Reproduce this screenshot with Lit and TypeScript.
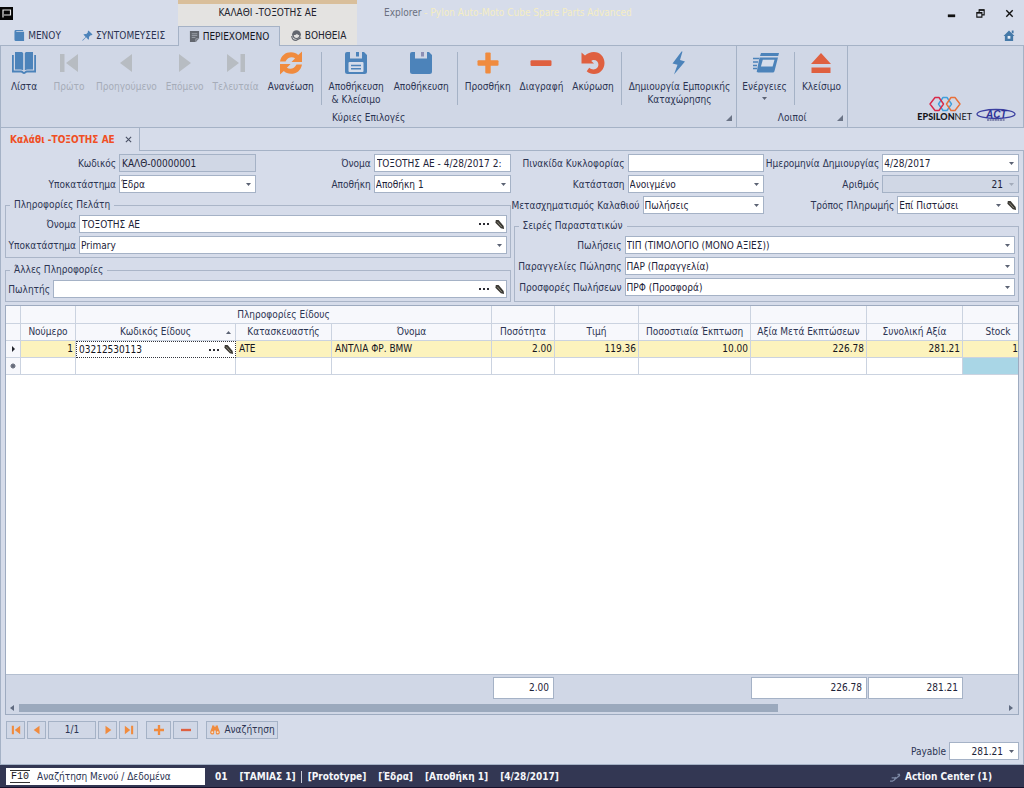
import { LitElement, html, css, svg, nothing, TemplateResult } from "lit";
import { customElement, property } from "lit/decorators.js";
import { classMap } from "lit/directives/class-map.js";

const BLUE = "#4c83ba";
const ORANGE = "#f08b3e";
const RED = "#df6040";
const GREY = "#b7bcc2";

const icons: Record<string, TemplateResult> = {
  book: svg`<path fill=${BLUE} d="M3 1h6c1.200 0 1.700.5 2.200 1.200v17C10.400 18.700 9.500 18.500 8.500 18.500H3zM21 1h-6c-1.200 0-1.700.5-2.200 1.200v17c.8-.5 1.700-.7 2.700-.7H21z"/><path fill="none" stroke=${BLUE} stroke-width="1.800" d="M.9 4v16.500h8.300c1.200 0 1.600 1.500 2.800 1.500s1.600-1.500 2.800-1.500h8.300V4"/>`,
  first: svg`<path fill=${GREY} d="M3 3h4.500v18H3zM21 3v18L9 12z"/>`,
  prev: svg`<path fill=${GREY} d="M18 3v18L6 12z"/>`,
  next: svg`<path fill=${GREY} d="M6 3v18l12-9z"/>`,
  last: svg`<path fill=${GREY} d="M16.500 3H21v18h-4.500zM3 3v18l12-9z"/>`,
  refresh: svg`<path fill=${ORANGE} d="M1 10.500C2 4.500 6.500 1.200 12 1.200c3 0 5.400 1 7.200 2.700L23 .5v10.500H12.500l3.600-3.700C13 5.200 8.500 6.200 6.500 10.500zM23 13.500c-1 6-5.500 9.300-11 9.300-3 0-5.400-1-7.200-2.700L1 23.500V13h10.500l-3.600 3.700c3.100 2.100 7.600 1.100 9.600-3.200z"/>`,
  saveClose: svg`<path fill=${BLUE} d="M3 1h3v6.500h12V1h2l3 3v16.500a2.500 2.500 0 0 1-2.500 2.500h-17A2.500 2.500 0 0 1 1 20.500V3a2 2 0 0 1 2-2z"/><path fill=${BLUE} d="M12 1h3v4.500h-3z"/><rect x="4.500" y="11" width="15" height="10" rx="1" fill="#d5ddeb"/><path stroke=${BLUE} stroke-width="1.500" d="M7 14.500h10M7 17.800h10"/>`,
  save: svg`<path fill=${BLUE} d="M3 1h3v6.500h12V1h2l3 3v16.500a2.500 2.500 0 0 1-2.500 2.500h-17A2.500 2.500 0 0 1 1 20.500V3a2 2 0 0 1 2-2z"/><path fill="#8d8fb5" d="M12 1h3v4.500h-3z"/>`,
  plus: svg`<rect x="1.500" y="9.300" width="21" height="5.400" rx="1" fill=${ORANGE}/><rect x="9.300" y="1.500" width="5.400" height="21" rx="1" fill=${ORANGE}/>`,
  minus: svg`<rect x="1.500" y="9.300" width="21" height="5.600" rx="1.200" fill=${RED}/>`,
  undo: svg`<path fill=${RED} d="M.5 1.500 4 4.500C6.500 2.300 9.500 1 12.800 1 19 1 23.500 5.800 23.500 12S19 23 13 23c-3 0-5.300-1-7.300-2.800l2.500-3.400c1.300 1 2.600 1.600 4.300 1.600 2.900 0 4.900-2 4.900-4.800s-2-4.600-4.600-4.600c-1.200 0-1.800.3-2.500.9l2.700 2.600H.5z"/>`,
  bolt: svg`<path fill=${BLUE} d="M14.500.5 5.500 12.500l5 1.200L7 23.500l11-13-5-1.500L15.500.5z"/>`,
  actions: svg`<path fill=${BLUE} d="M8 2h18l-.8 3H7zM6.500 6.500h18.500L21.500 20c-.3 1-1 1.500-2 1.500H5c-1 0-1.400-.5-1.200-1.300z"/><path fill="#d5ddeb" d="M9.800 8.800h11.700l-1.900 6.700H7.900z"/><path stroke=${BLUE} stroke-width="1.400" d="M0 7.500h6M0 11h5M0 14.500h4M0 17.500h4"/>`,
  eject: svg`<path fill=${RED} d="M12 2 22 13H2zM2.500 16.500h19v5.500h-19z"/>`,
};

const arrowDown = (cls = "") =>
  html`<svg class="arrow ${cls}" viewBox="0 0 5 3" aria-hidden="true"><path fill="currentColor" d="M0 0h5L2.500 3z"/></svg>`;

const pencil = html`<svg class="pencil" viewBox="0 0 12 12" aria-hidden="true">
  <path fill="#3a3833" d="M2 1h3l5.500 6.500.5 3.500-3.500-.8L1.500 4z"/>
  <path stroke="#a8a493" stroke-width=".8" d="m3.500 3 5 5.800"/>
</svg>`;

const icon24 = (name: string) =>
  html`<svg class="big" viewBox="0 0 24 24" aria-hidden="true">${icons[name]}</svg>`;

/* Values and metrics shared by every element of the window. */
const shared = css`
  :host {
    box-sizing: border-box;
    --ink: #2c3452;
    --line: #a5b2c6;
    --panel: #d6dcea;
  }
  * {
    box-sizing: border-box;
  }
  button,
  input,
  select {
    font: inherit;
    color: inherit;
    margin: 0;
    padding: 0;
    border: 0;
    background: none;
    border-radius: 0;
    outline: none;
    min-width: 0;
  }
  svg {
    display: block;
    flex: none;
    overflow: visible;
  }
  .arrow {
    width: 5px;
    height: 3px;
    color: #5b6273;
  }
  .pencil {
    width: 11px;
    height: 11px;
  }
`;

type Kind = "text" | "select" | "lookup" | "spin" | "selectEdit";

@customElement("form-field")
export class FormField extends LitElement {
  @property() label = "";
  @property() value = "";
  @property() kind: Kind = "text";
  @property({ type: Boolean }) locked = false;

  static styles = [
    shared,
    css`
      :host {
        display: flex;
        align-items: center;
        gap: 3px;
        height: 18px;
        min-width: 0;
      }
      label {
        flex: 0 0 var(--label, 111px);
        min-width: 0;
        padding-top: 1px;
        white-space: nowrap;
        display: flex;
        justify-content: flex-end;
      }
      .box {
        flex: 1;
        min-width: 0;
        height: 18px;
        display: grid;
        grid-template-columns: 1fr auto;
        align-items: center;
        background: #fff;
        border: 1px solid var(--line);
        color: #1d2338;
      }
      .locked {
        background: #d0d7e5;
      }
      .locked .arrow {
        color: #a3abba;
      }
      input,
      select {
        grid-area: 1 / 1 / 2 / 2;
        width: 100%;
        height: 16px;
        padding-left: 2px;
        appearance: none;
      }
      select {
        grid-area: 1 / 1 / 2 / 3;
        padding: 1px 0 0 1px;
      }
      .spin input {
        text-align: right;
      }
      .tools {
        grid-area: 1 / 2 / 2 / 3;
        display: flex;
        align-items: center;
        gap: 4px;
        padding-right: 4px;
        pointer-events: none;
      }
      .spin .tools {
        padding-left: 6px;
      }
      .edit {
        padding-right: 1px;
        gap: 5px;
      }
      .dots {
        width: 10px;
        height: 2px;
      }
    `,
  ];

  render() {
    const dots = html`<svg class="dots" viewBox="0 0 10 2" aria-hidden="true"><path fill="#2b2b33" d="M0 0h2v2H0zM4 0h2v2H4zM8 0h2v2H8z"/></svg>`;
    const isSelect = this.kind === "select" || this.kind === "selectEdit";
    const edit = this.kind === "lookup" || this.kind === "selectEdit";
    return html`
      <label for="f">${this.label}</label>
      <div class=${classMap({ box: true, locked: this.locked, spin: this.kind === "spin" })}>
        ${isSelect
          ? html`<select id="f"><option>${this.value}</option></select>`
          : html`<input id="f" .value=${this.value} ?readonly=${this.locked} />`}
        ${this.kind === "text"
          ? nothing
          : html`<span class=${classMap({ tools: true, edit })}>
              ${this.kind === "lookup" ? dots : arrowDown()}
              ${edit ? pencil : nothing}
            </span>`}
      </div>
    `;
  }
}

@customElement("app-ribbon")
export class AppRibbon extends LitElement {
  static styles = [
    shared,
    css`
      :host {
        display: flex;
        height: 83px;
        background: #d0d7e6;
        border: 1px solid var(--line);
      }
      .group {
        display: flex;
        flex-direction: column;
        border-right: 1px solid var(--line);
      }
      .buttons {
        display: flex;
        flex: 1;
        gap: 1px;
        padding: 4px 2px 0 1px;
      }
      .sep {
        width: 1px;
        height: 53px;
        margin: 2px 2px 0;
        background: var(--line);
      }
      button {
        display: flex;
        flex-direction: column;
        align-items: center;
        min-width: 44px;
        padding: 0 4px;
        line-height: 13px;
        white-space: pre;
      }
      button:disabled {
        color: #a6acb8;
      }
      .big {
        width: 24px;
        height: 24px;
        margin: 1px 0 5px;
      }
      .wide {
        padding: 0 5px;
      }
      .drop {
        margin-top: 4px;
      }
      .caption {
        display: grid;
        grid-template-columns: 7px 1fr 7px;
        align-items: center;
        height: 18px;
        padding: 0 3px;
        text-align: center;
      }
      .caption span {
        grid-column: 2;
      }
      .corner {
        width: 6px;
        height: 6px;
      }
      .brand {
        margin-left: auto;
        align-self: flex-end;
        display: flex;
        align-items: flex-end;
        gap: 4px;
        padding: 0 7px 5px 0;
      }
      .eps {
        display: flex;
        flex-direction: column;
        align-items: center;
        font: 9px/10px Lato, sans-serif;
        color: #15151a;
      }
      .eps b {
        font-weight: 900;
      }
      .rings {
        width: 32px;
        height: 16px;
      }
      .act {
        width: 40px;
        height: 14px;
      }
    `,
  ];

  private btn(icon: string, text: string, opts: { off?: boolean; wide?: boolean; drop?: boolean } = {}) {
    return html`<button class=${classMap({ wide: !!opts.wide })} ?disabled=${!!opts.off}>
      ${icon24(icon)}<span>${text}</span>${opts.drop ? arrowDown("drop") : nothing}
    </button>`;
  }

  render() {
    const sep = html`<i class="sep"></i>`;
    const corner = html`<svg class="corner" viewBox="0 0 6 6" aria-hidden="true"><path fill="#6b7486" d="M6 0v6H0z"/></svg>`;
    return html`
      <div class="group">
        <div class="buttons">
          ${this.btn("book", "Λίστα")} ${this.btn("first", "Πρώτο", { off: true })}
          ${this.btn("prev", "Προηγούμενο", { off: true })} ${this.btn("next", "Επόμενο", { off: true })}
          ${this.btn("last", "Τελευταία", { off: true })} ${this.btn("refresh", "Ανανέωση")} ${sep}
          ${this.btn("saveClose", "Αποθήκευση\n& Κλείσιμο")} ${this.btn("save", "Αποθήκευση", { wide: true })} ${sep}
          ${this.btn("plus", "Προσθήκη")} ${this.btn("minus", "Διαγραφή")} ${this.btn("undo", "Ακύρωση")} ${sep}
          ${this.btn("bolt", "Δημιουργία Εμπορικής\nΚαταχώρησης")}
        </div>
        <div class="caption"><span>Κύριες Επιλογές</span>${corner}</div>
      </div>
      <div class="group">
        <div class="buttons">
          ${this.btn("actions", "Ενέργειες", { drop: true })} ${sep} ${this.btn("eject", "Κλείσιμο")}
        </div>
        <div class="caption"><span>Λοιποί</span>${corner}</div>
      </div>
      <div class="brand">
        <div class="eps">
          <svg class="rings" viewBox="0 0 32 16" aria-hidden="true">
            <g fill="none" stroke-width="1.400" stroke-linejoin="round">
              <path stroke="#3f9fdc" d="M14 1.500h4L22.500 8 18 14.500h-4L9.500 8z"/>
              <path stroke="#d8294a" d="M6 1.500h4L14.500 8 10 14.500H6L1 8z"/>
              <path stroke="#e8703a" d="M22 1.500h4L31 8l-5 6.500h-4L17.500 8z"/>
            </g>
          </svg>
          <span><b>EPSILON</b>NET</span>
        </div>
        <svg class="act" viewBox="0 0 40 14" role="img" aria-label="ACT">
          <ellipse cx="20" cy="6" rx="19" ry="4.500" fill="none" stroke="#3a3fa0" stroke-width="1.300"/>
          <text x="10" y="10" font-family="Liberation Sans" font-weight="700" font-style="italic" font-size="10" fill="#2d3296">ACT</text>
          <path stroke="#3a3f78" stroke-dasharray="2 .6" d="M11 12h18"/>
        </svg>
      </div>
    `;
  }
}

@customElement("item-grid")
export class ItemGrid extends LitElement {
  static styles = [
    shared,
    css`
      :host {
        display: flex;
        flex-direction: column;
        flex: 1;
        min-width: 0;
        border: 1px solid #9eabc0;
        background: #fff;
        overflow: hidden;
      }
      .scroll {
        flex: 1;
        overflow: hidden;
      }
      table {
        border-collapse: separate;
        border-spacing: 0;
        table-layout: fixed;
        width: 100%;
        min-width: 1012px;
      }
      .c-mark {
        width: 15px;
      }
      .c-num {
        width: 55px;
      }
      .c-code,
      .c-name {
        width: 160px;
      }
      .c-maker,
      .c-total {
        width: 96px;
      }
      .c-qty {
        width: 63px;
      }
      .c-price {
        width: 84px;
      }
      .c-disc {
        width: 112px;
      }
      .c-net {
        width: 116px;
      }
      th,
      td {
        height: 17px;
        padding: 0 3px;
        border-right: 1px solid #cbd3e0;
        border-bottom: 1px solid #cbd3e0;
        white-space: nowrap;
        font-weight: 400;
        line-height: 14px;
      }
      th:last-child,
      td:last-child {
        border-right: 0;
      }
      th {
        background: #f7f8fc;
        text-align: center;
        color: var(--ink);
      }
      thead tr:first-child th {
        height: 18px;
      }
      th:last-child {
        padding-left: 18px;
      }
      td {
        color: #15151d;
      }
      .cur td {
        background: #fcf3bd;
      }
      .cur .mark,
      .mark {
        background: #f7f8fc;
        padding: 0;
      }
      .mark svg {
        margin: 0 auto;
      }
      .n {
        text-align: right;
        padding-right: 2px;
      }
      .n:last-child {
        padding-right: 0;
      }
      .sorted {
        display: grid;
        grid-template-columns: 6px 1fr 6px;
        align-items: center;
      }
      .sorted span {
        grid-column: 2;
      }
      .up {
        transform: rotate(180deg);
      }
      .cur .edit {
        background: #fff;
        padding: 0;
        border: 1px dotted #33363f;
      }
      .editor {
        display: flex;
        align-items: center;
        gap: 4px;
        padding: 0 1px 0 2px;
      }
      .editor input {
        flex: 1;
        height: 14px;
      }
      .dots {
        width: 10px;
        height: 2px;
      }
      .fill {
        background: #a9d6e6;
      }
      .foot {
        background: #d0d7e6;
        border-top: 1px solid #b4bfd0;
        height: 40px;
      }
      .sums {
        display: grid;
        grid-template-columns: 487px 62px 196px 117px 96px;
        padding-top: 2px;
      }
      .sum {
        height: 22px;
        margin-right: 1px;
        padding-right: 4px;
        background: #fff;
        border: 1px solid var(--line);
        text-align: right;
        line-height: 20px;
        color: #1d2338;
      }
      .bar {
        display: grid;
        grid-template-columns: 5px 1fr 5px;
        gap: 4px;
        align-items: center;
        padding: 5px 4px 0;
      }
      .bar svg {
        width: 4px;
        height: 6px;
      }
      .thumb {
        width: 77%;
        height: 8px;
        background: #9ba9bd;
      }
    `,
  ];

  render() {
    const heads = ["Νούμερο", "", "Κατασκευαστής", "Όνομα", "Ποσότητα", "Τιμή", "Ποσοστιαία Έκπτωση", "Αξία Μετά Εκπτώσεων", "Συνολική Αξία", "Stock"];
    const cols = ["mark", "num", "code", "maker", "name", "qty", "price", "disc", "net", "total", "stock"];
    const amounts = ["2.00", "119.36", "10.00", "226.78", "281.21", "1"];
    return html`
      <div class="scroll">
        <table>
          <colgroup>${cols.map((c) => html`<col class="c-${c}" />`)}</colgroup>
          <thead>
            <tr>
              <th></th><th></th><th colspan="3">Πληροφορίες Είδους</th>
              ${[0, 1, 2, 3, 4, 5].map(() => html`<th></th>`)}
            </tr>
            <tr>
              <th></th>
              ${heads.map((h) =>
                h
                  ? html`<th>${h}</th>`
                  : html`<th><div class="sorted"><span>Κωδικός Είδους</span>${arrowDown("up")}</div></th>`
              )}
            </tr>
          </thead>
          <tbody>
            <tr class="cur">
              <td class="mark"><svg width="3" height="6" viewBox="0 0 3 6" aria-hidden="true"><path d="M0 0v6l3-3z" fill="#22242c"/></svg></td>
              <td class="n">1</td>
              <td class="edit">
                <div class="editor">
                  <input aria-label="Κωδικός Είδους" .value=${"03212530113"} />
                  <svg class="dots" viewBox="0 0 10 2" aria-hidden="true"><path fill="#2b2b33" d="M0 0h2v2H0zM4 0h2v2H4zM8 0h2v2H8z"/></svg>
                  ${pencil}
                </div>
              </td>
              <td>ATE</td>
              <td>ΑΝΤΛΙΑ ΦΡ. BMW</td>
              ${amounts.map((a) => html`<td class="n">${a}</td>`)}
            </tr>
            <tr>
              <td class="mark"><svg width="6" height="6" viewBox="0 0 6 6" aria-hidden="true"><circle cx="3" cy="3" r="2" fill="#666b7a"/><path stroke="#666b7a" stroke-width=".8" d="M3 0v6M0 3h6M1 1l4 4M5 1 1 5"/></svg></td>
              ${[0, 1, 2, 3, 4, 5, 6, 7, 8].map(() => html`<td></td>`)}
              <td class="fill"></td>
            </tr>
          </tbody>
        </table>
      </div>
      <div class="foot">
        <div class="sums">
          <span></span><div class="sum">2.00</div><span></span>
          <div class="sum">226.78</div><div class="sum">281.21</div>
        </div>
        <div class="bar">
          <svg viewBox="0 0 4 6" aria-hidden="true"><path fill="#5f6a80" d="M4 0v6L0 3z"/></svg>
          <div class="thumb"></div>
          <svg viewBox="0 0 4 6" aria-hidden="true"><path fill="#5f6a80" d="M0 0v6l4-3z"/></svg>
        </div>
      </div>
    `;
  }
}

@customElement("app-root")
export class AppRoot extends LitElement {
  static styles = [
    shared,
    css`
      :host {
        display: flex;
        flex-direction: column;
        min-height: 100vh;
        background: #d6dcea;
        color: var(--ink);
        font: 10px/12px "DejaVu Sans Condensed", "Noto Sans", sans-serif;
      }
      header {
        display: grid;
        grid-template-columns: 178px 179px 1fr auto;
        height: 45px;
      }
      .start,
      .context,
      .title,
      .window {
        display: grid;
        grid-template-rows: 26px 19px;
        align-items: center;
      }
      .context {
        grid-template-rows: 22px 19px;
        background: #e4e3e1;
        border-top: 4px solid #d9bf9b;
        justify-items: center;
        color: #22222c;
      }
      .context > span {
        padding-bottom: 5px;
      }
      .tabs {
        display: flex;
        align-self: stretch;
        justify-self: stretch;
      }
      .tabs button {
        display: flex;
        align-items: center;
        justify-content: center;
        gap: 3px;
        flex: 1;
        border: 1px solid transparent;
        white-space: nowrap;
      }
      .start .tabs {
        padding-right: 6px;
      }
      .tabs .menu {
        flex: 0 0 75px;
      }
      .tabs .on {
        flex: 0 0 102px;
        height: 20px;
        background: #d0d7e6;
        border-color: var(--line);
        border-bottom: 0;
        color: #15151d;
        z-index: 1;
      }
      .tabs svg {
        width: 11px;
        height: 11px;
      }
      .logo {
        width: 13px;
        height: 13px;
      }
      .title {
        padding-left: 27px;
        color: #6b7080;
        white-space: pre;
      }
      .title b {
        font-weight: 400;
        color: #f4edc4;
      }
      .window div {
        display: flex;
        gap: 18px;
        padding-right: 9px;
      }
      .window button,
      .window button svg {
        width: 11px;
        height: 11px;
      }
      .window a {
        justify-self: end;
        padding-right: 9px;
      }
      .window a svg {
        width: 12px;
        height: 11px;
      }
      nav {
        display: flex;
        height: 23px;
        align-items: stretch;
      }
      .doc {
        display: flex;
        align-items: center;
        gap: 10px;
        width: 140px;
        padding-left: 9px;
        border: 1px solid var(--line);
        border-top: 0;
        border-bottom: 0;
        font-weight: 700;
        color: #f04e23;
        white-space: nowrap;
      }
      .doc svg {
        width: 7px;
        height: 7px;
      }
      .rest {
        flex: 1;
        border-bottom: 1px solid var(--line);
      }
      main {
        flex: 1;
        display: flex;
        flex-direction: column;
        padding: 3px 4px 4px;
        border: 1px solid var(--line);
        border-top: 0;
      }
      .form {
        display: grid;
        grid-template-columns: 1fr 1fr;
        gap: 3px;
        margin-bottom: 3px;
      }
      .half {
        display: flex;
        flex-direction: column;
        gap: 6px;
        min-width: 0;
      }
      .pairs {
        display: grid;
        grid-template-columns: 1fr 1fr;
        gap: 3px 4px;
      }
      .third {
        --label: 126px;
      }
      fieldset {
        margin: 0;
        min-width: 0;
        padding: 4px 3px 3px;
        border: 1px solid #aab5c8;
        display: flex;
        flex-direction: column;
        gap: 3px;
      }
      fieldset:last-child {
        flex: 1;
      }
      legend {
        margin-left: 1px;
        padding: 0 4px;
        height: 12px;
      }
      .customer {
        --label: 67px;
      }
      .other {
        --label: 41px;
      }
      .series {
        --label: 104px;
      }
      .pager {
        display: flex;
        gap: 2px;
        padding: 6px 1px 3px;
      }
      .pager button,
      .pager output {
        display: flex;
        align-items: center;
        justify-content: center;
        gap: 3px;
        width: 19px;
        height: 18px;
        border: 1px solid var(--line);
        background: #d0d7e6;
      }
      .pager output {
        width: 48px;
      }
      .pager .mid {
        width: 25px;
      }
      .pager .gap {
        margin-left: 6px;
      }
      .pager .find {
        width: 72px;
      }
      .pager svg {
        width: 10px;
        height: 10px;
      }
      .pager .find svg {
        width: 12px;
      }
      .payable {
        display: flex;
        justify-content: flex-end;
        --label: 50px;
      }
      .payable form-field {
        width: 123px;
      }
      footer {
        display: flex;
        align-items: center;
        height: 23px;
        padding: 1px 4px 0 6px;
        background: #333753;
        border-bottom: 1px solid #16112b;
        color: #f5f6fa;
        font-weight: 700;
      }
      .search {
        display: flex;
        align-items: center;
        width: 199px;
        height: 17px;
        padding-left: 4px;
        background: #fff;
        color: #2c3452;
        font-weight: 400;
      }
      .search kbd {
        padding: 0 1px;
        border: solid #333;
        border-width: 1px 0;
        font: 10px/11px "Liberation Mono", monospace;
        color: #15151d;
      }
      .search input {
        flex: 1;
        padding-left: 7px;
      }
      .search input::placeholder {
        color: inherit;
        opacity: 1;
      }
      .status {
        display: flex;
        gap: 12px;
        padding-left: 10px;
        white-space: nowrap;
      }
      .status .split {
        padding-right: 5px;
        margin-right: -6px;
        border-right: 1px solid #c9ccd8;
      }
      .center {
        margin-left: auto;
        margin-right: 28px;
        display: flex;
        align-items: center;
        gap: 4px;
        font-weight: 700;
      }
      .center svg {
        width: 12px;
        height: 10px;
      }
    `,
  ];

  render() {
    const glyph = (body: TemplateResult, box = "0 0 12 12") =>
      html`<svg viewBox=${box} aria-hidden="true">${body}</svg>`;
    return html`
      <header>
        <div class="start">
          <svg class="logo" viewBox="0 0 13 13" aria-hidden="true"><path fill="#050505" d="M0 0h13v13H0z"/><path fill="none" stroke="#e8e8e8" stroke-width="1.200" d="M3 10.500V3h7.500v5H4"/></svg>
          <div class="tabs">
            <button class="menu">${glyph(svg`<path fill=${BLUE} d="M2 0h8v1.200H2.500v.8H11v10H2a1.500 1.500 0 0 1-1.500-1.500v-9A1.500 1.500 0 0 1 2 0z"/>`)}ΜΕΝΟΥ</button>
            <button>${glyph(svg`<path fill=${BLUE} d="m7 .5 4.500 4.500-1.200.8-.8-.2-2 2c.4 1.200.2 2.200-.5 3L4.500 8 .8 11.800l-.5-.5L4 7.500 1.500 5c.8-.7 1.800-.9 3-.5l2-2-.2-1z"/>`)}ΣΥΝΤΟΜΕΥΣΕΙΣ</button>
          </div>
        </div>
        <div class="context">
          <span>ΚΑΛΑΘΙ -ΤΟΞΟΤΗΣ ΑΕ</span>
          <div class="tabs">
            <button class="on">${glyph(svg`<path fill="#63676f" d="M1 0h10v8L7.500 12H1z"/><path stroke="#aeb3bd" stroke-width=".8" fill="none" d="M3 3h6M3 5h6M3 7h4M7.500 12V8.500H11"/>`)}ΠΕΡΙΕΧΟΜΕΝΟ</button>
            <button>${glyph(svg`<circle cx="6" cy="5" r="4.800" fill="#63676f"/><path fill="#e4e3e1" d="M3 5.500c2 0 3-.5 3.500-1.500.5 1 1.300 1.400 2.500 1.500 0 2.200-1.400 3.300-3 3.300S3 7.700 3 5.500z"/><path fill="none" stroke="#63676f" stroke-width="1.300" d="M.8 6.500C1 9.500 3 11.300 5.500 11.300L11 8.500"/>`)}ΒΟΗΘΕΙΑ</button>
          </div>
        </div>
        <div class="title"><span>Explorer <b>- Pylon Auto-Moto Cube Spare Parts Advanced</b></span></div>
        <div class="window">
          <div>
            <button aria-label="Minimize">${glyph(svg`<path fill="#111" d="M2 7h8v3H2z"/>`)}</button>
            <button aria-label="Restore">${glyph(svg`<path fill="none" stroke="#111" stroke-width="1.200" d="M2 5h5.500v5H2zM4.500 5V2H10v5.500H7.500"/><path fill="#111" d="M2 4.500h5.500V6H2zM4.500 1.500H10V3H4.500z"/>`)}</button>
            <button aria-label="Close">${glyph(svg`<path stroke="#111" stroke-width="1.500" d="m2.500 2.500 7 7M9.500 2.500l-7 7"/>`)}</button>
          </div>
          <a href="#" aria-label="Home">${glyph(svg`<path fill="#4579a8" d="M6 .5 12 6.500h-1.500V12h-9V6.500H0zM9 .5h2v3H9z"/><path fill="#e8eef7" d="M4.500 6.500h3v3h-3z"/>`)}</a>
        </div>
      </header>

      <app-ribbon></app-ribbon>

      <nav>
        <button class="doc">Καλάθι -ΤΟΞΟΤΗΣ ΑΕ ${glyph(svg`<path stroke="#4a5166" stroke-width="1.300" d="m1 1 6 6M7 1 1 7"/>`, "0 0 8 8")}</button>
        <div class="rest"></div>
      </nav>

      <main>
        <div class="form">
          <div class="half">
            <div class="pairs">
              <form-field label="Κωδικός" value="ΚΑΛΘ-00000001" locked></form-field>
              <form-field label="Όνομα" value="ΤΟΞΟΤΗΣ ΑΕ - 4/28/2017 2:"></form-field>
              <form-field label="Υποκατάστημα" value="Έδρα" kind="select"></form-field>
              <form-field label="Αποθήκη" value="Αποθήκη 1" kind="select"></form-field>
            </div>
            <fieldset class="customer">
              <legend>Πληροφορίες Πελάτη</legend>
              <form-field label="Όνομα" value="ΤΟΞΟΤΗΣ ΑΕ" kind="lookup"></form-field>
              <form-field label="Υποκατάστημα" value="Primary" kind="select"></form-field>
            </fieldset>
            <fieldset class="other">
              <legend>Άλλες Πληροφορίες</legend>
              <form-field label="Πωλητής" kind="lookup"></form-field>
            </fieldset>
          </div>
          <div class="half">
            <div class="pairs">
              <form-field label="Πινακίδα Κυκλοφορίας"></form-field>
              <form-field label="Ημερομηνία Δημιουργίας" value="4/28/2017" kind="select"></form-field>
              <form-field label="Κατάσταση" value="Ανοιγμένο" kind="select"></form-field>
              <form-field label="Αριθμός" value="21" kind="spin" locked></form-field>
              <form-field class="third" label="Μετασχηματισμός Καλαθιού" value="Πωλήσεις" kind="select"></form-field>
              <form-field class="third" label="Τρόπος Πληρωμής" value="Επί Πιστώσει" kind="selectEdit"></form-field>
            </div>
            <fieldset class="series">
              <legend>Σειρές Παραστατικών</legend>
              <form-field label="Πωλήσεις" value="ΤΙΠ (ΤΙΜΟΛΟΓΙΟ (ΜΟΝΟ ΑΞΙΕΣ))" kind="select"></form-field>
              <form-field label="Παραγγελίες Πώλησης" value="ΠΑΡ (Παραγγελία)" kind="select"></form-field>
              <form-field label="Προσφορές Πωλήσεων" value="ΠΡΦ (Προσφορά)" kind="select"></form-field>
            </fieldset>
          </div>
        </div>

        <item-grid></item-grid>

        <div class="pager">
          <button aria-label="First">${glyph(svg`<path fill=${ORANGE} d="M1 1h2.500v10H1zM11 1v10L4.500 6z"/>`)}</button>
          <button aria-label="Previous">${glyph(svg`<path fill=${ORANGE} d="M9 1v10L2 6z"/>`)}</button>
          <output>1/1</output>
          <button aria-label="Next">${glyph(svg`<path fill=${ORANGE} d="M3 1v10l7-5z"/>`)}</button>
          <button aria-label="Last">${glyph(svg`<path fill=${ORANGE} d="M8.500 1H11v10H8.500zM1 1v10l6.500-5z"/>`)}</button>
          <button class="mid gap" aria-label="Add">${glyph(svg`<path fill=${ORANGE} d="M4.600 0h2.800v4.600H12v2.800H7.400V12H4.600V7.400H0V4.600h4.600z"/>`)}</button>
          <button class="mid" aria-label="Remove">${glyph(svg`<path fill=${RED} d="M0 4.600h12v2.800H0z"/>`)}</button>
          <button class="find gap">${glyph(svg`<path fill=${ORANGE} d="M2.500.5h2.700V2h1.600V.5h2.700V2l2 5.500c1 2-.2 4-2.200 4S7 10.500 7 9V6.500H5V9c0 1.500-.4 2.500-2.300 2.500s-3.200-2-2.200-4L2.500 2z"/><circle cx="2.800" cy="8.800" r="1.200" fill="#fbe0c6"/><circle cx="9.200" cy="8.800" r="1.200" fill="#fbe0c6"/>`)}Αναζήτηση</button>
        </div>
        <div class="payable">
          <form-field label="Payable" value="281.21" kind="spin"></form-field>
        </div>
      </main>

      <footer>
        <label class="search"><kbd>F10</kbd><input placeholder="Αναζήτηση Μενού / Δεδομένα" /></label>
        <div class="status">
          <span>01</span><span class="split">[ΤΑΜΙΑΣ 1]</span><span>[Prototype]</span><span>[Έδρα]</span><span>[Αποθήκη 1]</span><span>[4/28/2017]</span>
        </div>
        <button class="center">${glyph(svg`<path stroke="#7d89a6" stroke-width="1.600" fill="none" d="M0 11h3l9-7M2 7h5M5 10l2-4M9 3h3"/>`)}Action Center (1)</button>
      </footer>
    `;
  }
}
